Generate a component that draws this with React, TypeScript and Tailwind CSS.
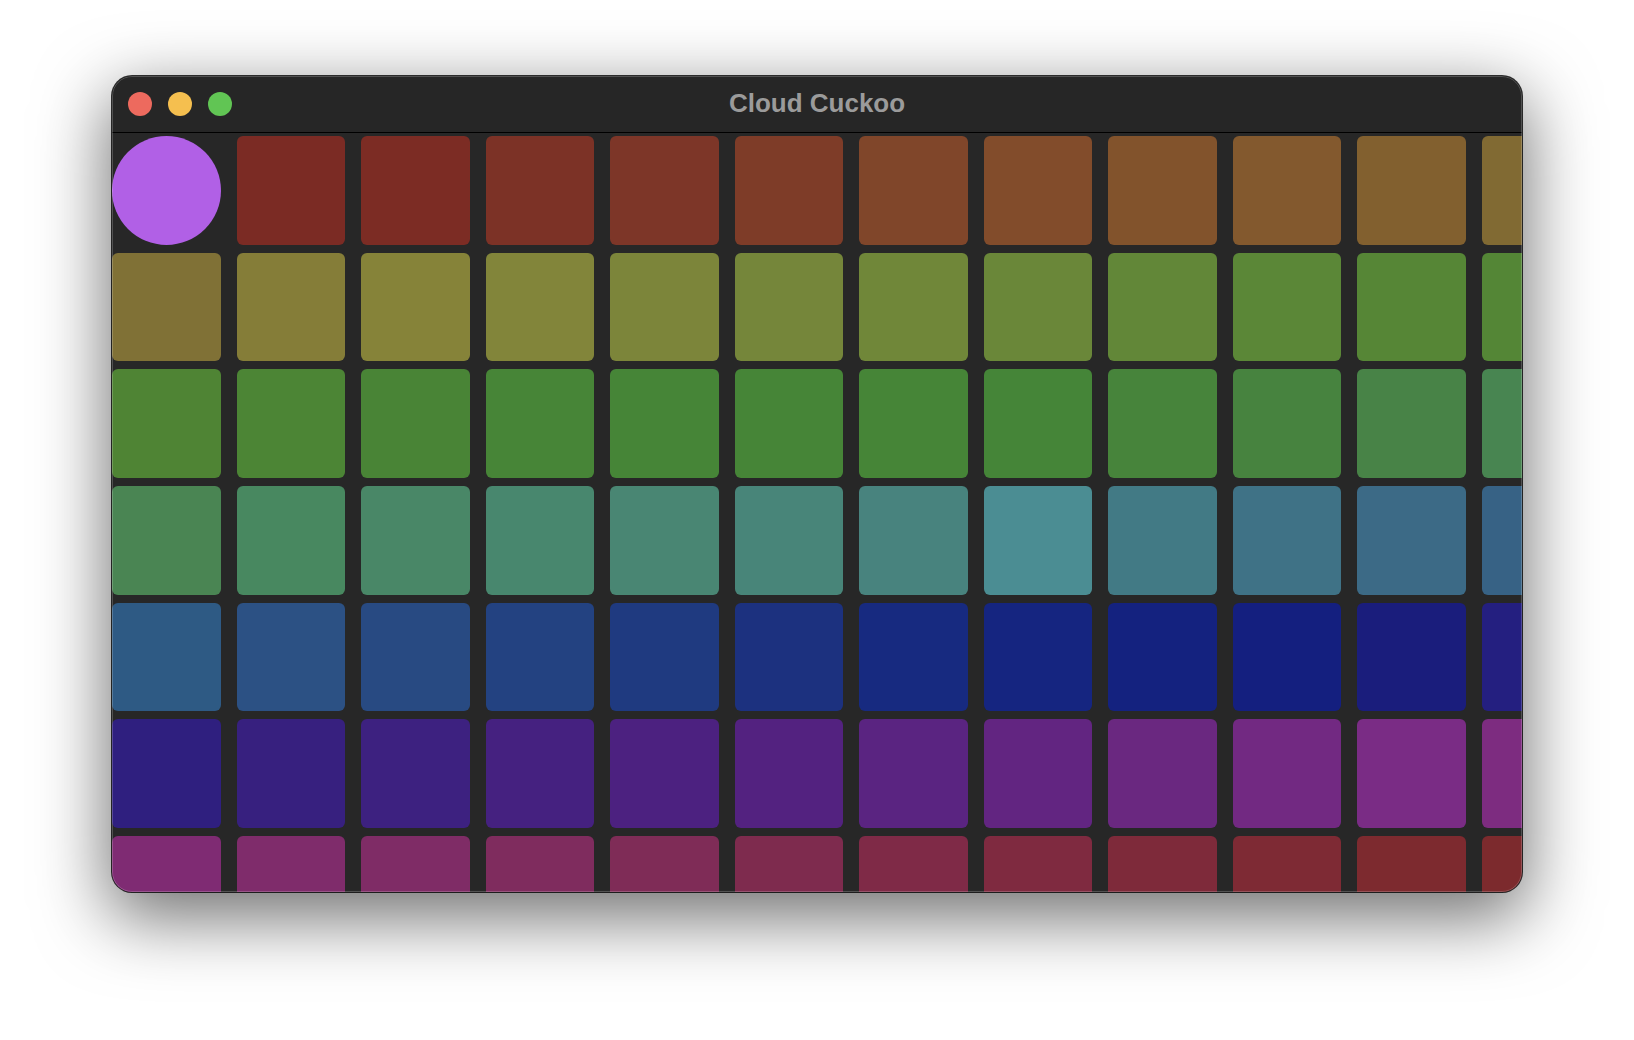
const ROWS: string[][] = [
  ['#7b2b24', '#7c2c24', '#7c3226', '#7d3628', '#7e3c28', '#80462a', '#824c2b', '#82532c', '#83592e', '#82602f', '#816a33'],
  ['#807136', '#857d38', '#868339', '#82853a', '#7c853a', '#75863a', '#708739', '#6a8739', '#628738', '#5b8737', '#568636', '#548636'],
  ['#4f8434', '#4c8535', '#498436', '#478537', '#468537', '#468537', '#468537', '#458538', '#47843b', '#47833f', '#488347', '#488551'],
  ['#4a8553', '#488860', '#498767', '#48876e', '#498673', '#488579', '#48837e', '#4b8d93', '#427a85', '#3f7286', '#3c6a86', '#376285'],
  ['#2e5a84', '#2c5184', '#284a82', '#234281', '#1f3a80', '#1c317f', '#172a80', '#152580', '#14227f', '#141f7f', '#1a1d7c', '#241f80'],
  ['#2f1f7f', '#37207f', '#3d2180', '#452180', '#4c2180', '#532280', '#5a2481', '#622581', '#6a2880', '#722982', '#7a2c85', '#7d2c80'],
  ['#7f2b73', '#7f2c6b', '#7f2c66', '#7f2c5e', '#7f2c57', '#7e2b4e', '#7f2a47', '#7f2a40', '#7e2a3a', '#7e2a34', '#7d2a2f', '#7c2a2d'],
]

function TrafficLights() {
  return (
    <div className="flex items-center gap-[16px] pl-[16px]">
      <span className="block w-[24px] h-[24px] rounded-full bg-[#ed6a5e]" />
      <span className="block w-[24px] h-[24px] rounded-full bg-[#f5bf4f]" />
      <span className="block w-[24px] h-[24px] rounded-full bg-[#61c554]" />
    </div>
  )
}

export default function App() {
  return (
    <div className="w-full h-[1040px] bg-white flex justify-center pt-[76px] overflow-hidden">
      <div className="relative w-[1410px] h-[816px] rounded-[20px] overflow-hidden bg-[#272727] ring-1 ring-black/80 shadow-[0_22px_70px_4px_rgba(0,0,0,0.56)]">
        <div className="h-[57px] border-b border-black bg-[#262626] grid grid-cols-[1fr_auto_1fr] items-center">
          <TrafficLights />
          <span
            className="text-[26px] font-bold text-[#9b9b9b] leading-none -mt-[2px]"
            style={{ fontFamily: '"Liberation Sans", Arial, sans-serif' }}
          >
            Cloud Cuckoo
          </span>
          <span />
        </div>

        <div className="pt-[3px] grid grid-cols-[repeat(12,108.5px)] auto-rows-[108.5px] gap-x-[16px] gap-y-[8.2px]">
          <div className="rounded-full bg-[#b160e6]" />
          {ROWS.flat().map((c, i) => (
            <div key={i} className="rounded-[6px]" style={{ backgroundColor: c }} />
          ))}
        </div>

        <div className="pointer-events-none absolute inset-0 rounded-[20px] border border-white/20" />
      </div>
    </div>
  )
}
